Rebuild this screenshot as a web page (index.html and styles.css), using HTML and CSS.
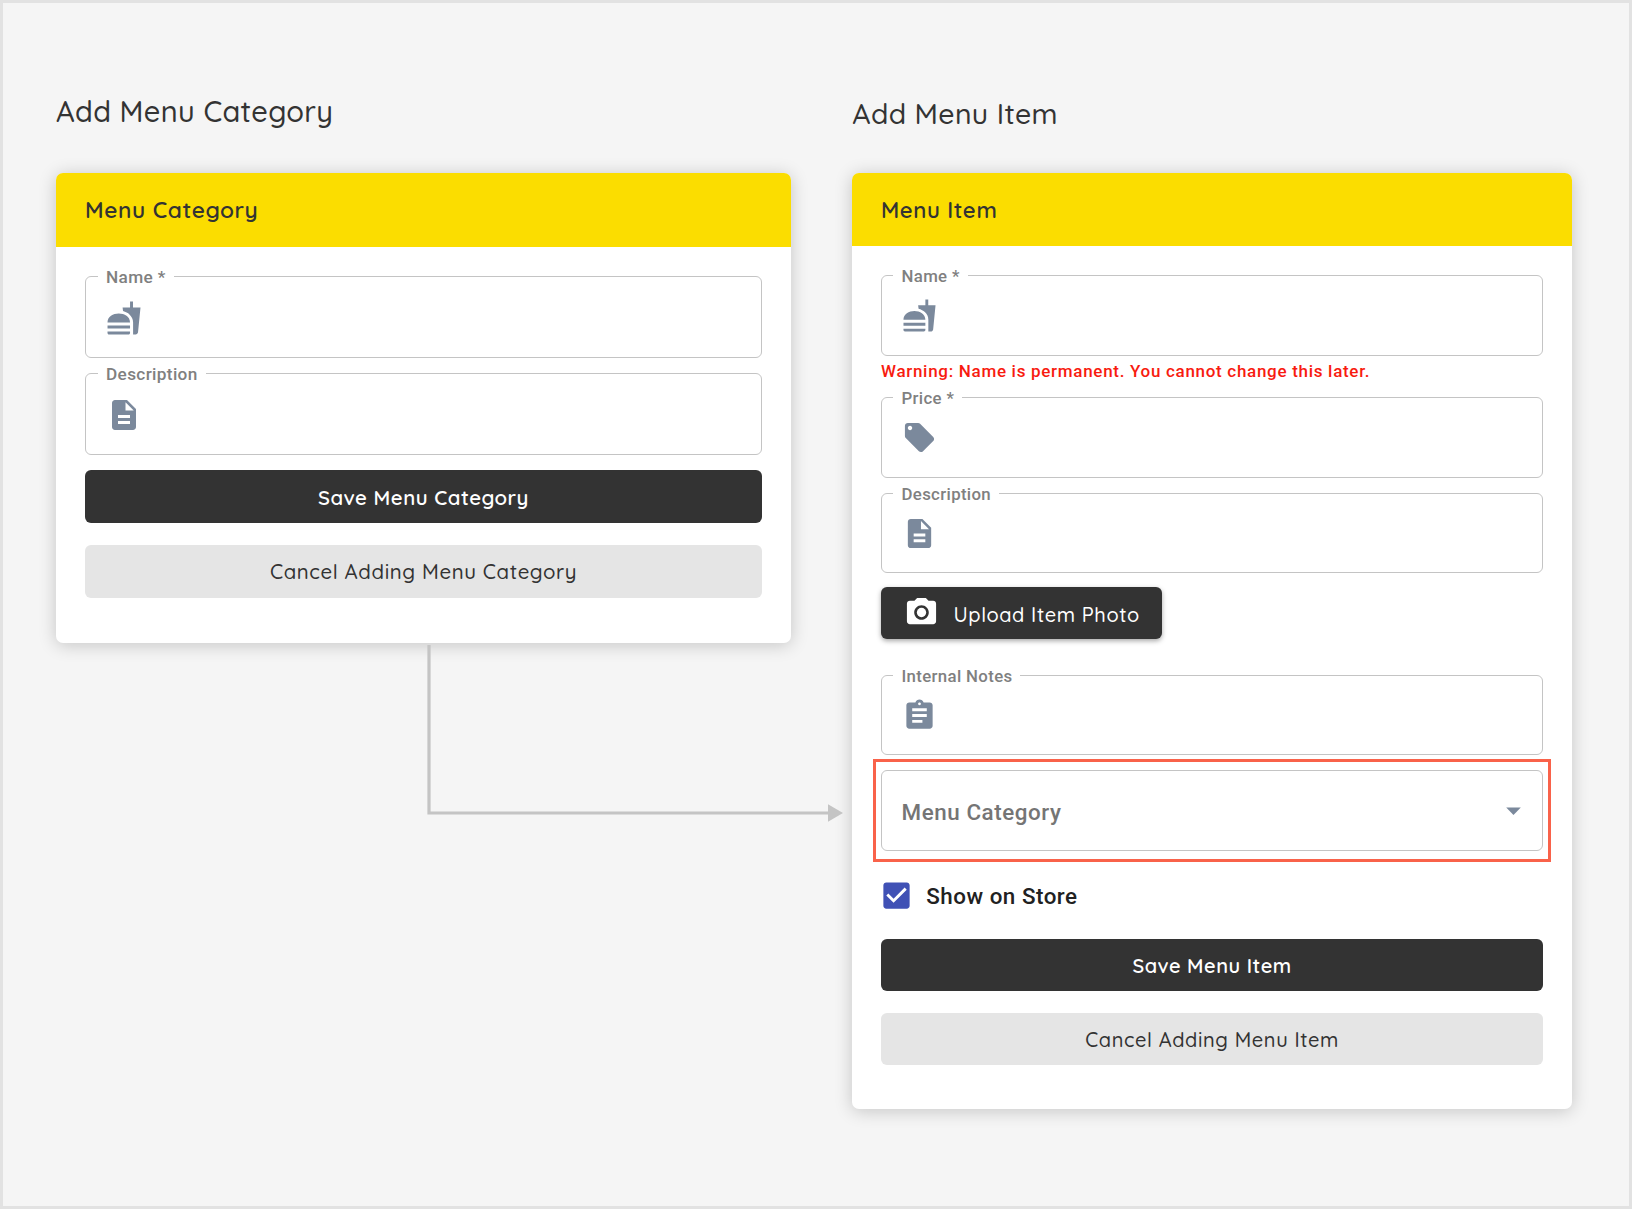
FILE: index.html
```
<!DOCTYPE html>
<html lang="en">
<head>
<meta charset="utf-8">
<title>Menu setup</title>
<link rel="stylesheet" href="styles.css">
</head>
<body>
<svg class="sprite" aria-hidden="true">
  <symbol id="fastfood" viewBox="0 0 24 24"><path d="M18.06 22.99h1.66c.84 0 1.53-.64 1.63-1.46L23 5.05h-5V1h-1.97v4.05h-4.97l.3 2.34c1.71.47 3.31 1.32 4.27 2.26 1.44 1.42 2.43 2.89 2.43 5.29v8.05zM1 21.99V21h15.03v.99c0 .55-.45 1-1.01 1H2.01c-.56 0-1.01-.45-1.01-1zm15.03-7c0-8-15.03-8-15.03 0h15.03zM1.02 17h15v2h-15z"/></symbol>
  <symbol id="document" viewBox="0 0 24 24"><path d="M14 2H6c-1.1 0-1.99.9-1.99 2L4 20c0 1.1.89 2 1.99 2H18c1.1 0 2-.9 2-2V8l-6-6zm2 16H8v-2h8v2zm0-4H8v-2h8v2zm-3-5V3.5L18.5 9H13z"/></symbol>
  <symbol id="tag" viewBox="0 0 24 24"><path d="M21.41 11.58l-9-9C12.05 2.22 11.55 2 11 2H4c-1.1 0-2 .9-2 2v7c0 .55.22 1.05.59 1.42l9 9c.36.36.86.58 1.41.58.55 0 1.05-.22 1.41-.59l7-7c.37-.36.59-.86.59-1.41 0-.55-.23-1.06-.59-1.42zM5.5 7C4.67 7 4 6.33 4 5.5S4.67 4 5.5 4 7 4.67 7 5.5 6.33 7 5.5 7z"/></symbol>
  <symbol id="clipboard" viewBox="0 0 24 24"><path d="M19 3h-4.18C14.4 1.84 13.3 1 12 1c-1.3 0-2.4.84-2.82 2H5c-1.1 0-2 .9-2 2v14c0 1.1.9 2 2 2h14c1.1 0 2-.9 2-2V5c0-1.1-.9-2-2-2zm-7 0c.55 0 1 .45 1 1s-.45 1-1 1-1-.45-1-1 .45-1 1-1zm2 14H7v-2h7v2zm3-4H7v-2h10v2zm0-4H7V7h10v2z"/></symbol>
  <symbol id="camera" viewBox="0 0 24 24"><circle cx="12" cy="12" r="3.2"/><path d="M9 2L7.17 4H4c-1.1 0-2 .9-2 2v12c0 1.1.9 2 2 2h16c1.1 0 2-.9 2-2V6c0-1.1-.9-2-2-2h-3.17L15 2H9zm3 15c-2.76 0-5-2.24-5-5s2.24-5 5-5 5 2.24 5 5-2.24 5-5 5z"/></symbol>
  <symbol id="checked" viewBox="0 0 24 24"><path d="M19 3H5c-1.11 0-2 .9-2 2v14c0 1.1.89 2 2 2h14c1.11 0 2-.9 2-2V5c0-1.1-.89-2-2-2zm-9 14l-5-5 1.41-1.41L10 14.17l7.59-7.59L19 8l-9 9z"/></symbol>
  <symbol id="dropdown" viewBox="0 0 24 24"><path d="M7 10l5 5 5-5z"/></symbol>
</svg>
<main class="page">
  <section class="panel panel-category">
    <h1 class="title">Add Menu Category</h1>
    <div class="card">
      <h2 class="card-header">Menu Category</h2>
      <div class="card-body">
        <fieldset class="field"><legend>Name *</legend><svg class="icon"><use href="#fastfood"/></svg></fieldset>
        <fieldset class="field"><legend>Description</legend><svg class="icon"><use href="#document"/></svg></fieldset>
        <button class="button button-dark">Save Menu Category</button>
        <button class="button button-light">Cancel Adding Menu Category</button>
      </div>
    </div>
  </section>
  <section class="panel panel-item">
    <h1 class="title">Add Menu Item</h1>
    <div class="card">
      <h2 class="card-header">Menu Item</h2>
      <div class="card-body">
        <fieldset class="field"><legend>Name *</legend><svg class="icon"><use href="#fastfood"/></svg></fieldset>
        <p class="warning">Warning: Name is permanent. You cannot change this later.</p>
        <fieldset class="field"><legend>Price *</legend><svg class="icon"><use href="#tag"/></svg></fieldset>
        <fieldset class="field"><legend>Description</legend><svg class="icon"><use href="#document"/></svg></fieldset>
        <button class="button button-upload"><svg class="icon"><use href="#camera"/></svg><span>Upload Item Photo</span></button>
        <fieldset class="field"><legend>Internal Notes</legend><svg class="icon"><use href="#clipboard"/></svg></fieldset>
        <div class="select"><span>Menu Category</span><svg class="icon"><use href="#dropdown"/></svg></div>
        <label class="check"><svg class="icon"><use href="#checked"/></svg><span>Show on Store</span></label>
        <button class="button button-dark">Save Menu Item</button>
        <button class="button button-light">Cancel Adding Menu Item</button>
      </div>
    </div>
  </section>
  <svg class="connector" viewBox="0 0 420 180"><path class="line" d="M4 0V168H404"/><path class="head" d="M403 159.300v17.500l15-8.800z"/></svg>
</main>
</body>
</html>
```
FILE: styles.css
```
* { box-sizing: border-box; }

body {
  margin: 0;
  font-family: Roboto, "Liberation Sans", sans-serif;
  font-weight: 500;
  color: #333;
}

.sprite { display: none; }

.page {
  position: relative;
  display: flex;
  align-items: flex-start;
  gap: 61.3px;
  width: 1632px;
  height: 1209px;
  padding: 0 0 0 53px;
  border: 3px solid #e2e2e2;
  background: #f5f5f5;
}

.title, .card-header, .button {
  font-family: Quicksand, Inter, sans-serif;
}

.title {
  height: 170px;
  margin: 0;
  padding-top: 90px;
  font-size: 29px;
  font-weight: 550;
  line-height: 36px;
  letter-spacing: .34px;
}

.card {
  border-radius: 7px;
  background: #fff;
  box-shadow: 0 2px 18px rgba(0, 0, 0, .2);
}

.card-header {
  display: flex;
  align-items: center;
  height: 74px;
  margin: 0;
  padding: 0 29px 1px;
  border-radius: 7px 7px 0 0;
  background: #fbdd00;
  font-size: 22.7px;
  font-weight: 650;
  letter-spacing: .6px;
}

.card-body {
  display: flex;
  flex-direction: column;
  padding: 29px 29px 45px;
}

.field {
  height: 82px;
  margin: 0 0 15.2px;
  padding: 22.5px 20px 0;
  border: 1px solid #c4c4c4;
  border-radius: 6px;
  color: #808080;
  font-size: 17.2px;
  letter-spacing: .35px;
}

.field legend {
  height: 1px;
  margin-left: -8px;
  padding: 0 8px;
  line-height: 3px;
  white-space: nowrap;
}

.icon {
  display: block;
  flex: none;
  width: 36px;
  height: 36px;
  fill: #7b899c;
}

.button {
  display: flex;
  align-items: center;
  justify-content: center;
  height: 53px;
  margin: 0;
  padding: 1px 0 0;
  border: 0;
  border-radius: 6px;
  font-size: 20.4px;
  font-weight: 600;
  letter-spacing: .5px;
}

.button-dark { margin-bottom: 21.3px; background: #333; color: #fff; }
.button-light { background: #e5e5e5; color: #333; font-weight: 500; letter-spacing: .62px; }

.panel-category { width: 735px; }
.panel-item { width: 719.7px; }

.panel-item .title { padding-top: 93px; font-size: 28.4px; }
.panel-item .card { margin-top: .4px; }
.panel-item .card-header { height: 72.6px; padding: 0 28.7px; font-size: 22.2px; }
.panel-item .card-body { padding: 29px 28.7px 44px; }
.panel-item .field { height: 80.6px; margin-bottom: 15px; padding-left: 19.5px; font-size: 16.8px; }
.panel-item .icon { width: 35px; height: 35px; }
.panel-item .field .icon { margin-left: .5px; }
.panel-item .button { height: 51.7px; font-size: 20px; }
.panel-item .button-dark { margin-bottom: 22px; }

.panel-item .warning {
  margin: -15px 0 0;
  height: 41.4px;
  color: #f81b10;
  font-size: 17px;
  line-height: 30px;
  letter-spacing: .7px;
}

.panel-item .button-upload {
  align-self: flex-start;
  justify-content: flex-start;
  gap: 14.5px;
  width: 281px;
  margin: -1px 0 35.8px;
  padding: 2px 0 0 23px;
  background: #333;
  color: #fff;
  font-weight: 550;
  letter-spacing: .6px;
  box-shadow: 0 2px 5px rgba(0, 0, 0, .35);
}

.button-upload .icon { margin-top: -3px; fill: #fff; }

.select {
  position: relative;
  display: flex;
  align-items: center;
  justify-content: space-between;
  height: 80.8px;
  padding: 0 11px 0 19.5px;
  border: 1px solid #c4c4c4;
  border-radius: 6px;
  color: #757575;
  font-size: 22.4px;
  font-weight: 480;
  letter-spacing: .57px;
}

.select span { padding-top: 2px; }

/* Highlight frame around the category dropdown */
.select::after {
  content: "";
  position: absolute;
  inset: -12px -9px -11.500px;
  border: 3px solid #f9624a;
}

.check {
  display: flex;
  align-items: center;
  gap: 12.7px;
  height: 88.2px;
  margin-left: -2.4px;
  padding-top: 1.600px;
  color: #212121;
  font-size: 22.4px;
  letter-spacing: .5px;
}

.check .icon { fill: #4051b5; }

.check span { padding-top: 1px; }

.connector {
  position: absolute;
  left: 422px;
  top: 642px;
  width: 420px;
  height: 180px;
}

.connector .line { fill: none; stroke: #c4c4c4; stroke-width: 3.2; }
.connector .head { fill: #c4c4c4; }
```
